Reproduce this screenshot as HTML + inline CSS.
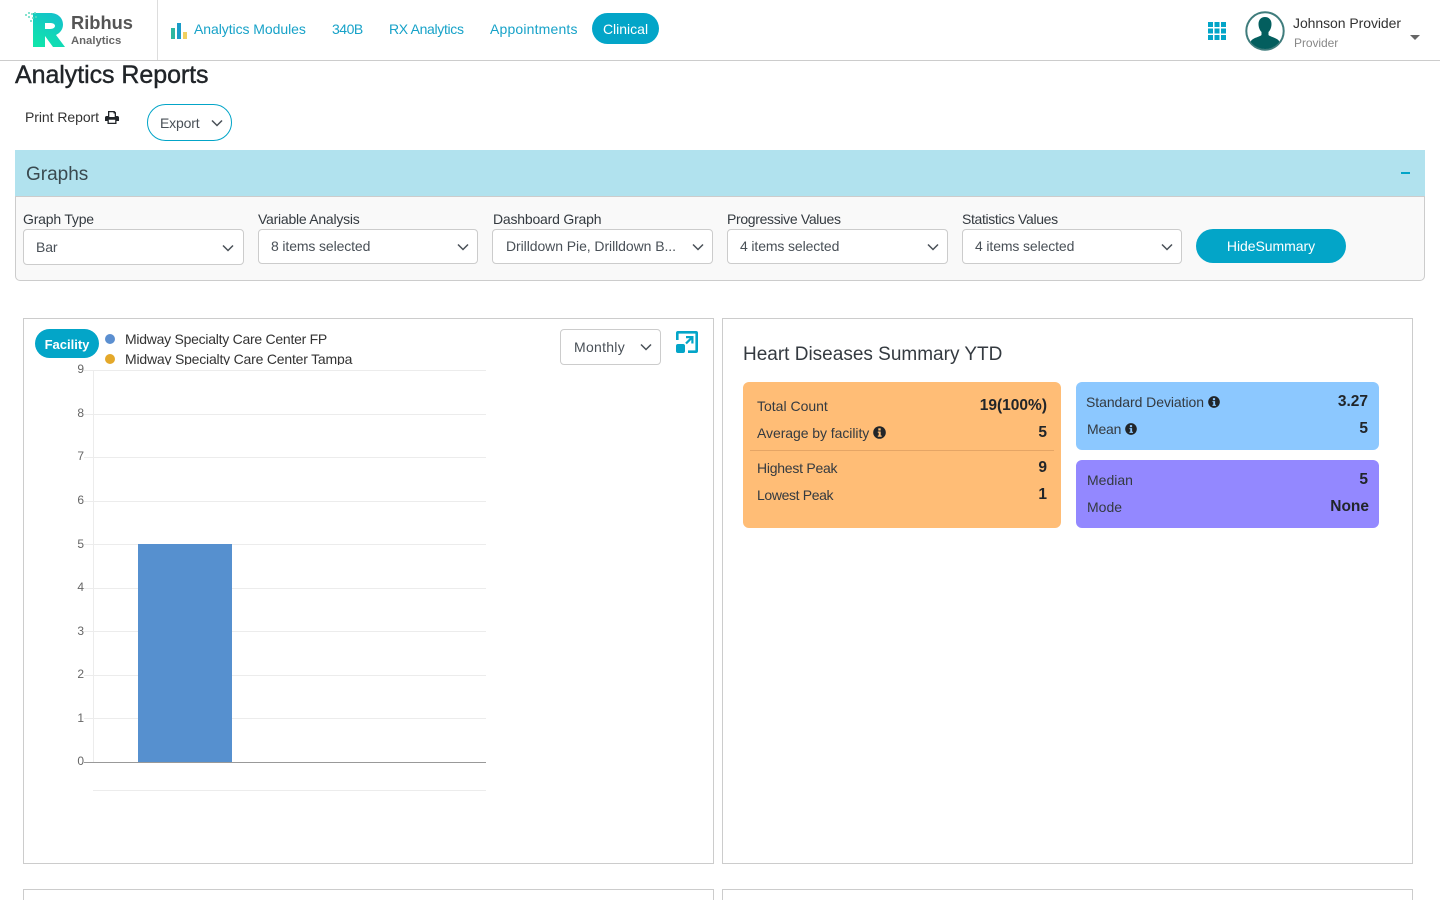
<!DOCTYPE html>
<html><head><meta charset="utf-8"><title>Analytics Reports</title>
<style>
*{box-sizing:border-box}
html,body{margin:0;padding:0;width:1440px;height:900px;overflow:hidden;background:#fff;font-family:"Liberation Sans",sans-serif;color:#212529}
#p{position:relative;width:1440px;height:900px;overflow:hidden}
.a{position:absolute;white-space:nowrap}
.t{font-size:14px;line-height:18px}
.nav{color:#17a2c8;font-size:14px;line-height:18px;top:20px}
.sel{position:absolute;top:229px;height:35px;background:#fff;border:1px solid #ccc;border-radius:4px;font-size:14px;line-height:33px;padding-left:12px;color:#495057;letter-spacing:-.12px}
.sel svg,.chev{position:absolute}
.lbl{top:210px;font-size:14px;line-height:18px;color:#343a40}
.box{position:absolute;border:1px solid #ccc;background:#fff}
.card{position:absolute;border-radius:6px}
.k{font-size:14px;line-height:18px;color:#343a40}
.v{font-size:15.500px;line-height:18px;font-weight:bold;color:#212529;text-align:right}
.yl{position:absolute;left:70px;width:14px;text-align:right;font-size:12px;line-height:14px;color:#666}
.gl{position:absolute;left:84px;width:402px;height:1px;background:#ececec}
</style></head><body><div id="p">

<!-- header -->
<div class="a" style="left:0;top:60px;width:1440px;height:1px;background:#ccc"></div>
<div class="a" style="left:157px;top:0;width:1px;height:60px;background:#ddd"></div>

<svg class="a" style="left:24px;top:11px" width="44" height="38" viewBox="0 0 44 38">
<defs><linearGradient id="g" x1="0.800" y1="0" x2="0.300" y2="1"><stop offset="0" stop-color="#14c0cc"/><stop offset="1" stop-color="#10e4ac"/></linearGradient></defs>
<path fill="url(#g)" fill-rule="evenodd" d="M9 2H26C34 2 39 7 39 13.500C39 18.500 36 22 32 24L41 36H29L21 25V36H9ZM21 12V18H26C29 18 31 16.500 31 15C31 13 29 12 26 12Z"/>
<g fill="#5fd8c0"><circle cx="2" cy="4" r="1"/><circle cx="5" cy="6" r="1"/><circle cx="8" cy="3" r="1"/><circle cx="11" cy="2" r="1"/><circle cx="5" cy="2" r="1"/><circle cx="9" cy="7" r="1"/><circle cx="7" cy="10" r="1"/><circle cx="12" cy="6" r="1"/></g>
</svg>
<div class="a" style="left:71px;top:11px;font-size:18.300px;line-height:24px;font-weight:bold;color:#555">Ribhus</div>
<div class="a" style="left:71px;top:34px;font-size:11.300px;line-height:14px;font-weight:bold;color:#666">Analytics</div>

<svg class="a" style="left:171px;top:23px" width="16" height="16"><rect x="0" y="5" width="4" height="11" fill="#2cb7a0"/><rect x="6" y="0" width="4" height="16" fill="#1a9cc8"/><rect x="12" y="9" width="4" height="7" fill="#f0d060"/></svg>
<div class="a nav" style="left:194px;letter-spacing:-.06px">Analytics Modules</div>
<div class="a nav" style="left:332px;letter-spacing:-.5px">340B</div>
<div class="a nav" style="left:389px;letter-spacing:-.33px">RX Analytics</div>
<div class="a nav" style="left:490px;letter-spacing:.17px">Appointments</div>
<div class="a" style="left:592px;top:13px;width:67px;height:31px;border-radius:16px;background:#03a5c8;color:#fff;font-size:14px;line-height:32px;text-align:center">Clinical</div>

<svg class="a" style="left:1208px;top:22px" width="18" height="18" fill="#03a5c8"><rect x="0" y="0" width="5" height="5"/><rect x="6.500" y="0" width="5" height="5"/><rect x="13" y="0" width="5" height="5"/><rect x="0" y="6.500" width="5" height="5"/><rect x="6.500" y="6.500" width="5" height="5"/><rect x="13" y="6.500" width="5" height="5"/><rect x="0" y="13" width="5" height="5"/><rect x="6.500" y="13" width="5" height="5"/><rect x="13" y="13" width="5" height="5"/></svg>
<svg class="a" style="left:1245px;top:11px" width="40" height="40" viewBox="0 0 40 40">
<defs><clipPath id="c"><circle cx="20" cy="20" r="18"/></clipPath></defs>
<circle cx="20" cy="20" r="18.700" fill="#fff" stroke="#3f7c7c" stroke-width="2"/>
<g clip-path="url(#c)" fill="#035e5e"><path d="M20 6c4 0 6.500 3 6.500 7 0 3-1 6-3 8v3c1 1.500 9 3 10.500 6 1 2 1 8 1 10H5c0-2 0-8 1-10 1.500-3 9.500-4.500 10.500-6v-3c-2-2-3-5-3-8 0-4 2.500-7 6.500-7z"/></g>
</svg>
<div class="a" style="left:1293px;top:14px;font-size:14px;line-height:18px;color:#333;letter-spacing:-.06px">Johnson Provider</div>
<div class="a" style="left:1294px;top:35px;font-size:12px;line-height:16px;color:#888;letter-spacing:-.06px">Provider</div>
<div class="a" style="left:1410px;top:35px;width:0;height:0;border-left:5px solid transparent;border-right:5px solid transparent;border-top:5px solid #666"></div>

<!-- title -->
<div class="a" style="left:15px;top:60px;font-size:25px;line-height:31px;color:#212529;letter-spacing:-.06px;-webkit-text-stroke:.4px #212529">Analytics Reports</div>
<div class="a t" style="left:25px;top:108px;color:#333;letter-spacing:-.06px">Print Report</div>
<svg class="a" style="left:105px;top:111px" width="14" height="13" viewBox="0 0 14 13"><path fill="#212529" d="M3 0h6.500L11 1.500V5h1.500c.8 0 1.500.7 1.500 1.500V10h-2.500v3h-9v-3H0V6.500C0 5.700.7 5 1.500 5H3zM4.300 1.300V6h5.400V2.500H8.500V1.300zM3.800 8.800v3h6.400v-3z"/></svg>
<div class="a" style="left:147px;top:104px;width:85px;height:37px;border:1px solid #03a5c8;border-radius:19px;font-size:14px;line-height:37px;padding-left:12px;color:#495057;letter-spacing:-.17px">Export</div>
<svg class="a" style="left:211px;top:119px" width="12" height="8" fill="none" stroke="#495057" stroke-width="1.500"><path d="M1 1.500l5 5 5-5"/></svg>

<!-- graphs bar -->
<div class="a" style="left:15px;top:150px;width:1410px;height:46px;background:#b1e2ee"></div>
<div class="a" style="left:26px;top:163px;font-size:19px;line-height:24px;color:#3a4a50">Graphs</div>
<div class="a" style="left:1401px;top:172px;width:9px;height:2px;background:#03a5c8"></div>

<!-- filter panel -->
<div class="a" style="left:15px;top:196px;width:1410px;height:85px;background:#f9f9f9;border:1px solid #ccc;border-radius:0 0 5px 5px"></div>
<div class="a lbl" style="left:23px;letter-spacing:-.2px">Graph Type</div>
<div class="a lbl" style="left:258px;letter-spacing:-.24px">Variable Analysis</div>
<div class="a lbl" style="left:493px;letter-spacing:-.2px">Dashboard Graph</div>
<div class="a lbl" style="left:727px;letter-spacing:-.33px">Progressive Values</div>
<div class="a lbl" style="left:962px;letter-spacing:-.35px">Statistics Values</div>

<div class="sel" style="left:23px;width:221px;height:36px;line-height:35px">Bar<svg style="right:9px;top:14px" width="12" height="8" fill="none" stroke="#495057" stroke-width="1.500"><path d="M1 1.500l5 5 5-5"/></svg></div>
<div class="sel" style="left:258px;width:220px">8 items selected<svg style="right:8px;top:13px" width="12" height="8" fill="none" stroke="#495057" stroke-width="1.500"><path d="M1 1.500l5 5 5-5"/></svg></div>
<div class="sel" style="left:492px;width:221px;padding-left:13px;letter-spacing:-.07px">Drilldown Pie, Drilldown B...<svg style="right:8px;top:13px" width="12" height="8" fill="none" stroke="#495057" stroke-width="1.500"><path d="M1 1.500l5 5 5-5"/></svg></div>
<div class="sel" style="left:727px;width:221px">4 items selected<svg style="right:8px;top:13px" width="12" height="8" fill="none" stroke="#495057" stroke-width="1.500"><path d="M1 1.500l5 5 5-5"/></svg></div>
<div class="sel" style="left:962px;width:220px">4 items selected<svg style="right:8px;top:13px" width="12" height="8" fill="none" stroke="#495057" stroke-width="1.500"><path d="M1 1.500l5 5 5-5"/></svg></div>
<div class="a" style="left:1196px;top:229px;width:150px;height:34px;border-radius:17px;background:#03a5c8;color:#fff;font-size:14px;line-height:34px;text-align:center;letter-spacing:-.05px">HideSummary</div>

<!-- left chart -->
<div class="box" style="left:23px;top:318px;width:691px;height:546px"></div>
<div class="a" style="left:35px;top:329px;width:64px;height:29px;border-radius:15px;background:#03a5c8;color:#fff;font-size:13px;font-weight:bold;line-height:31px;text-align:center">Facility</div>
<div class="a" style="left:105px;top:334px;width:10px;height:10px;border-radius:50%;background:#5b8fd0"></div>
<div class="a t" style="left:125px;top:330px;color:#333;letter-spacing:-.26px">Midway Specialty Care Center FP</div>
<div class="a" style="left:105px;top:354px;width:10px;height:10px;border-radius:50%;background:#e4a82a"></div>
<div class="a" style="left:125px;top:350px;width:300px;height:15px;overflow:hidden;font-size:14px;line-height:18px;color:#333;letter-spacing:-.2px">Midway Specialty Care Center Tampa</div>

<div class="a" style="left:560px;top:329px;width:101px;height:36px;border:1px solid #ccc;border-radius:4px;font-size:14px;line-height:35px;padding-left:13px;color:#495057;letter-spacing:.28px">Monthly</div>
<svg class="a" style="left:640px;top:343px" width="12" height="8" fill="none" stroke="#495057" stroke-width="1.500"><path d="M1 1.500l5 5 5-5"/></svg>
<svg class="a" style="left:675px;top:330px" width="24" height="24" viewBox="0 0 24 24" fill="#03a5c8"><path d="M1 10V3a2 2 0 0 1 2-2h18a2 2 0 0 1 2 2v18a2 2 0 0 1-2 2h-8v-2.600h7.400V3.600H3.600V10z"/><rect x="1" y="14" width="9" height="9" rx="2"/><path d="M11 6h7.500v7.500h-2.200V9.800l-4.500 4.500-1.600-1.600 4.500-4.500H11z"/></svg>

<div class="gl" style="top:370px"></div><div class="gl" style="top:414px"></div><div class="gl" style="top:457px"></div><div class="gl" style="top:501px"></div><div class="gl" style="top:544px"></div><div class="gl" style="top:588px"></div><div class="gl" style="top:631px"></div><div class="gl" style="top:675px"></div><div class="gl" style="top:718px"></div>
<div class="gl" style="top:762px;background:#999"></div>
<div class="gl" style="top:790px;left:93px;width:393px"></div>
<div class="a" style="left:93px;top:370px;width:1px;height:392px;background:#ececec"></div>
<div class="yl" style="top:362px">9</div><div class="yl" style="top:406px">8</div><div class="yl" style="top:449px">7</div><div class="yl" style="top:493px">6</div><div class="yl" style="top:537px">5</div><div class="yl" style="top:580px">4</div><div class="yl" style="top:624px">3</div><div class="yl" style="top:667px">2</div><div class="yl" style="top:711px">1</div><div class="yl" style="top:754px">0</div>
<div class="a" style="left:138px;top:544px;width:94px;height:218px;background:#5690cf"></div>

<!-- right summary -->
<div class="box" style="left:722px;top:318px;width:691px;height:546px"></div>
<div class="a" style="left:743px;top:343px;font-size:19px;line-height:24px;color:#343a40">Heart Diseases Summary YTD</div>

<div class="card" style="left:743px;top:382px;width:318px;height:146px;background:#ffbd76"></div>
<div class="a k" style="left:757px;top:397px">Total Count</div><div class="a v" style="right:393px;top:397px">19(100%)</div>
<div class="a k" style="left:757px;top:424px;letter-spacing:-.06px">Average by facility</div>
<svg class="a" style="left:873px;top:426px" width="13" height="13" viewBox="0 0 13 13"><circle cx="6.500" cy="6.500" r="6.300" fill="#212529"/><rect x="5.300" y="2.300" width="2.400" height="2.200" fill="#ffbd76"/><path d="M4.800 5.500h2.900v4h1v1.200H4.800V9.500h.9V6.700h-.9z" fill="#ffbd76"/></svg>
<div class="a v" style="right:393px;top:424px">5</div>
<div class="a" style="left:750px;top:450px;width:304px;height:1px;background:#e5a565"></div>
<div class="a k" style="left:757px;top:459px;letter-spacing:-.25px">Highest Peak</div><div class="a v" style="right:393px;top:459px">9</div>
<div class="a k" style="left:757px;top:486px;letter-spacing:-.36px">Lowest Peak</div><div class="a v" style="right:393px;top:486px">1</div>

<div class="card" style="left:1076px;top:382px;width:303px;height:68px;background:#8cc8ff"></div>
<div class="a k" style="left:1086px;top:393px;letter-spacing:-.06px">Standard Deviation</div>
<svg class="a" style="left:1208px;top:396px" width="12" height="12" viewBox="0 0 13 13"><circle cx="6.500" cy="6.500" r="6.300" fill="#212529"/><rect x="5.300" y="2.300" width="2.400" height="2.200" fill="#8cc8ff"/><path d="M4.800 5.500h2.900v4h1v1.200H4.800V9.500h.9V6.700h-.9z" fill="#8cc8ff"/></svg>
<div class="a v" style="right:72px;top:393px">3.27</div>
<div class="a k" style="left:1087px;top:420px;letter-spacing:-.2px">Mean</div>
<svg class="a" style="left:1125px;top:423px" width="12" height="12" viewBox="0 0 13 13"><circle cx="6.500" cy="6.500" r="6.300" fill="#212529"/><rect x="5.300" y="2.300" width="2.400" height="2.200" fill="#8cc8ff"/><path d="M4.800 5.500h2.900v4h1v1.200H4.800V9.500h.9V6.700h-.9z" fill="#8cc8ff"/></svg>
<div class="a v" style="right:72px;top:420px">5</div>

<div class="card" style="left:1076px;top:460px;width:303px;height:68px;background:#9388ff"></div>
<div class="a k" style="left:1087px;top:471px">Median</div><div class="a v" style="right:72px;top:471px">5</div>
<div class="a k" style="left:1087px;top:498px">Mode</div><div class="a v" style="right:71px;top:498px">None</div>

<!-- next row -->
<div class="box" style="left:23px;top:889px;width:691px;height:30px"></div>
<div class="box" style="left:722px;top:889px;width:691px;height:30px"></div>
</div></body></html>
